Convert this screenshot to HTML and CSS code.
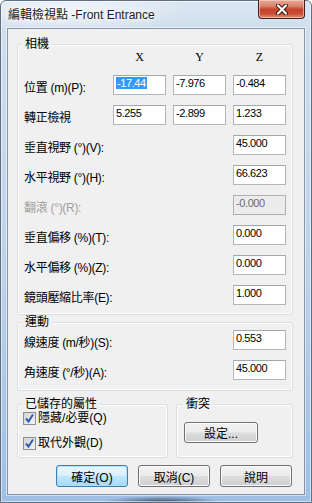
FILE: index.html
```html
<!DOCTYPE html>
<html lang="zh-Hant">
<head>
  <meta charset="UTF-8" />
  <meta name="viewport" content="width=device-width, initial-scale=1.0" />
  <title>編輯檢視點</title>
  <link rel="stylesheet" href="styles.css">
</head>
<body>

  <div class="window">
    <!-- ===== 標題列 ===== -->
    <div class="titlebar">
      <span class="title">編輯檢視點 -Front Entrance</span>
      <button class="close" aria-label="關閉">
        <svg width="14" height="11" viewBox="0 0 14 11">
          <path d="M3 1.5 L11 9.5 M11 1.5 L3 9.5" stroke="#3b1710" stroke-width="4" stroke-linecap="round"/>
          <path d="M3 1.5 L11 9.5 M11 1.5 L3 9.5" stroke="#fff" stroke-width="2.2" stroke-linecap="round"/>
        </svg>
      </button>
    </div>

    <div class="client">
      <!-- 相機 -->
      <div class="group camera">
        <div class="group-title">相機</div>
        <div class="grid">
          <span class="axis-gap"></span><span class="axis">X</span><span class="axis">Y</span><span class="axis">Z</span>

          <label class="lbl">位置 (m)(P):</label>
          <div class="field"><span class="sel">-17.44</span></div>
          <div class="field">-7.976</div>
          <div class="field">-0.484</div>

          <label class="lbl">轉正檢視</label>
          <div class="field">5.255</div>
          <div class="field">-2.899</div>
          <div class="field">1.233</div>

          <label class="lbl wide">垂直視野 (°)(V):</label>
          <div class="field">45.000</div>

          <label class="lbl wide">水平視野 (°)(H):</label>
          <div class="field">66.623</div>

          <label class="lbl wide off">翻滾 (°)(R):</label>
          <div class="field off">-0.000</div>

          <label class="lbl wide">垂直偏移 (%)(T):</label>
          <div class="field">0.000</div>

          <label class="lbl wide">水平偏移 (%)(Z):</label>
          <div class="field">0.000</div>

          <label class="lbl wide">鏡頭壓縮比率(E):</label>
          <div class="field">1.000</div>
        </div>
      </div>

      <!-- 運動 -->
      <div class="group motion">
        <div class="group-title">運動</div>
        <div class="grid">
          <label class="lbl wide">線速度 (m/秒)(S):</label>
          <div class="field">0.553</div>

          <label class="lbl wide">角速度 (°/秒)(A):</label>
          <div class="field">45.000</div>
        </div>
      </div>

      <!-- 已儲存的屬性 / 衝突 -->
      <div class="pair">
        <div class="group saved">
          <div class="group-title">已儲存的屬性</div>
          <label class="check"><span class="box"><svg width="11" height="11" viewBox="0 0 11 11"><path d="M2 5.5 L4.5 8.5 L9 1.5" fill="none" stroke="#2a5fb8" stroke-width="2"/></svg></span>隱藏/必要(Q)</label>
          <label class="check"><span class="box"><svg width="11" height="11" viewBox="0 0 11 11"><path d="M2 5.5 L4.5 8.5 L9 1.5" fill="none" stroke="#2a5fb8" stroke-width="2"/></svg></span>取代外觀(D)</label>
        </div>
        <div class="group clash">
          <div class="group-title">衝突</div>
          <button class="btn set">設定...</button>
        </div>
      </div>

      <!-- 按鈕 -->
      <div class="actions">
        <button class="btn default">確定(O)</button>
        <button class="btn">取消(C)</button>
        <button class="btn">說明</button>
      </div>
    </div>
  </div>

</body>
</html>
```

FILE: styles.css
```css
/* ===== 基本 ===== */
body{
  margin:0;padding:0;
  width:312px;height:503px;
  font-family:"Liberation Sans","Noto Sans CJK TC",sans-serif;
  font-size:12px;color:#000;
  background:#fff;overflow:hidden;
}

/* ===== 視窗外框 (Aero) ===== */
.window{
  box-sizing:border-box;width:312px;height:503px;
  border:1px solid #5f6f82;border-radius:6px 6px 0 0;
  background:
    radial-gradient(ellipse 60px 6px at 52% 100%, rgba(30,40,60,.75), rgba(30,40,60,0)),
    radial-gradient(ellipse 120px 22px at 22% 10px, rgba(255,255,255,.7), rgba(255,255,255,0)),
    linear-gradient(180deg,#dbe6f2 0,#d0deed 28px,#bcd2ea 55%,#9ebfe4 100%);
  box-shadow:inset 0 0 0 1px rgba(255,255,255,.55);
  display:flex;flex-direction:column;
}

.titlebar{height:27px;display:flex;justify-content:space-between;align-items:flex-start;}
.title{padding:7px 0 0 7px;line-height:15px;color:#1b1b1b;text-shadow:0 0 6px #fff,0 0 3px #fff;}
.close{
  width:47px;height:19px;margin:-1px 6px 0 0;padding:0;
  border:1px solid #4b1d16;border-top:none;border-radius:0 0 4px 4px;
  background:linear-gradient(180deg,#e9ab9a 0,#d8826b 35%,#c4432a 52%,#c84c32 75%,#de9076 100%);
  box-shadow:inset 0 0 0 1px rgba(255,220,210,.55);
  display:flex;align-items:center;justify-content:center;
}

.client{
  flex:1;margin:0 6px 7px 6px;
  border:1px solid #8595aa;
  background:#f0f0f0;
  box-shadow:0 0 0 1px rgba(255,255,255,.5);
}

/* ===== 群組 ===== */
.group{border:1px solid #d5dfe5;border-radius:3px;box-shadow:inset 0 0 0 1px #fff;}
.group-title{margin:-8px 0 0 4px;padding:0 3px;width:fit-content;background:#f0f0f0;line-height:14px;}

.camera{margin:15px 11px 0 9px;}
.motion{margin:7px 11px 0 9px;}

.grid{
  display:grid;grid-template-columns:1fr 53px 53px 53px;
  column-gap:7px;row-gap:10px;
  padding:0 6px 9px 6px;
}
.camera .grid{margin-top:-1px;}
.motion .grid{margin-top:1px;padding-bottom:10px;}

.axis{
  text-align:center;line-height:15px;
  font-family:"Liberation Serif",serif;font-size:12px;
}
.lbl{align-self:end;line-height:14px;white-space:nowrap;letter-spacing:-.3px;}
.lbl.wide{grid-column:1 / 4;}
.lbl.off{color:#a0a0a0;}

.field{
  box-sizing:border-box;height:20px;grid-column:auto;
  background:#fff;border:1px solid #b3b7bd;border-top-color:#a3a8ae;
  padding:1px 2px;line-height:13px;font-size:11px;letter-spacing:-.4px;
  white-space:nowrap;overflow:hidden;
}
.wide + .field{grid-column:4;}
.field.off{background:#ececec;border-color:#adb1b6;color:#6d6d6d;}
.sel{background:#3399ff;color:#fff;padding:0 1px;}

/* 下方兩個群組 */
.pair{display:flex;gap:8px;margin:13px 11px 0 9px;}
.saved{width:149px;padding-bottom:7px;}
.clash{flex:1;}
.clash .group-title{margin-left:6px;}

.check{display:flex;align-items:center;gap:2px;margin-left:5px;line-height:14px;}
.check + .check{margin-top:11px;}
.box{
  box-sizing:border-box;width:13px;height:13px;
  border:1px solid #8e8f8f;
  background:linear-gradient(135deg,#d2d2d2,#f4f4f4);
  display:flex;align-items:center;justify-content:center;
}

/* ===== 按鈕 ===== */
.btn{
  box-sizing:border-box;height:22px;padding:0;
  font-family:"Liberation Sans","Noto Sans CJK TC",sans-serif;font-size:12px;color:#000;
  border:1px solid #707070;border-radius:3px;
  background:linear-gradient(180deg,#f2f2f2 0,#ebebeb 48%,#dddddd 52%,#cfcfcf 100%);
  box-shadow:inset 0 0 0 1px #fcfcfc;
}
.set{width:74px;height:21px;margin:11px 0 0 7px;}
.default{
  border-color:#3c7fb1;
  background:linear-gradient(180deg,#eaf6fd 0,#d9f0fc 48%,#bee6fd 52%,#a7d9f5 100%);
  box-shadow:inset 0 0 0 1px #b3e0f9;
}

.actions{display:flex;justify-content:flex-end;gap:10px;margin-top:7px;padding-right:12px;}
.actions .btn{width:72px;}
```
